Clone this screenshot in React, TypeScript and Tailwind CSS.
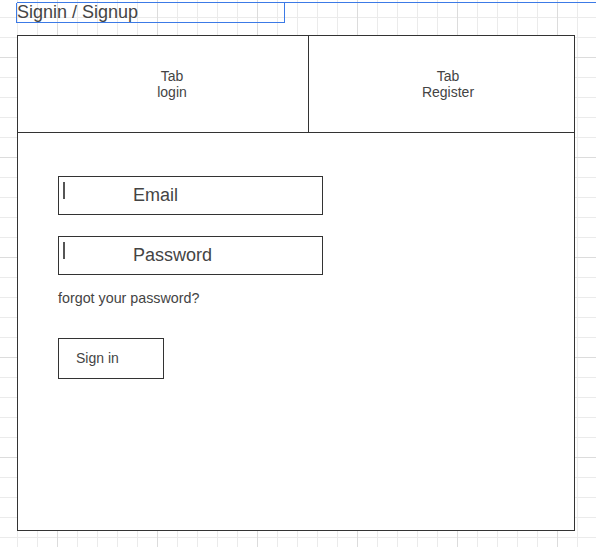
const GridBg = () => (
  <svg className="absolute inset-0" width="596" height="547">
    <defs>
      <pattern id="minor" x="17" y="17" width="20" height="20" patternUnits="userSpaceOnUse">
        <path d="M0.5 0 V20 M0 0.5 H20" stroke="#ebebeb" strokeWidth="1" fill="none" />
      </pattern>
      <pattern id="major" x="57" y="57" width="100" height="100" patternUnits="userSpaceOnUse">
        <path d="M0.5 0 V100 M0 0.5 H100" stroke="#dcdcdc" strokeWidth="1" fill="none" />
      </pattern>
    </defs>
    <rect width="596" height="547" fill="url(#minor)" />
    <rect width="596" height="547" fill="url(#major)" />
  </svg>
);

const Field = ({ label }: { label: string }) => (
  <div className="relative flex h-[39px] w-[265px] items-center border border-[#333333] bg-white pl-[74px] text-[18px] text-[#444444]">
    <span className="absolute left-[4px] top-[5px] h-[17px] w-[2px] bg-[#555555]" />
    {label}
  </div>
);

export default function App() {
  return (
    <div className="relative h-[547px] w-[596px] overflow-hidden bg-white font-['Liberation_Sans',Arial,sans-serif]">
      <GridBg />
      <div className="relative">
        <div className="ml-[17px] mt-[2px] border-t border-[#3c7ae6]">
          <div className="-ml-px h-[20px] w-[269px] border-x border-b border-[#3c7ae6] text-[18px] leading-[19px] text-[#444444]">
            Signin / Signup
          </div>
        </div>

        <div className="ml-[17px] mt-[12px] flex h-[496px] w-[558px] flex-col border-[1.5px] border-[#333333] bg-white">
          <div className="flex h-[97px] border-b-[1.5px] border-[#333333] text-[14px] leading-[16px] text-[#444444]">
            <div className="flex w-[291px] flex-col items-center justify-center border-r-[1.5px] border-[#333333] pl-[18px] text-center">
              <span>Tab</span>
              <span>login</span>
            </div>
            <div className="flex flex-1 flex-col items-center justify-center pb-[1px] pl-[13px] text-center">
              <span>Tab</span>
              <span>Register</span>
            </div>
          </div>

          <div className="flex flex-col pl-[40px] pt-[43px]">
            <Field label="Email" />
            <div className="mt-[21px]">
              <Field label="Password" />
            </div>
            <p className="mt-[15px] text-[14.3px] leading-[17px] text-[#444444]">forgot your password?</p>
            <button className="mt-[31px] flex h-[41px] w-[106px] items-center border border-[#333333] pl-[17px] text-[14px] text-[#444444]">
              Sign in
            </button>
          </div>
        </div>
      </div>
    </div>
  );
}
